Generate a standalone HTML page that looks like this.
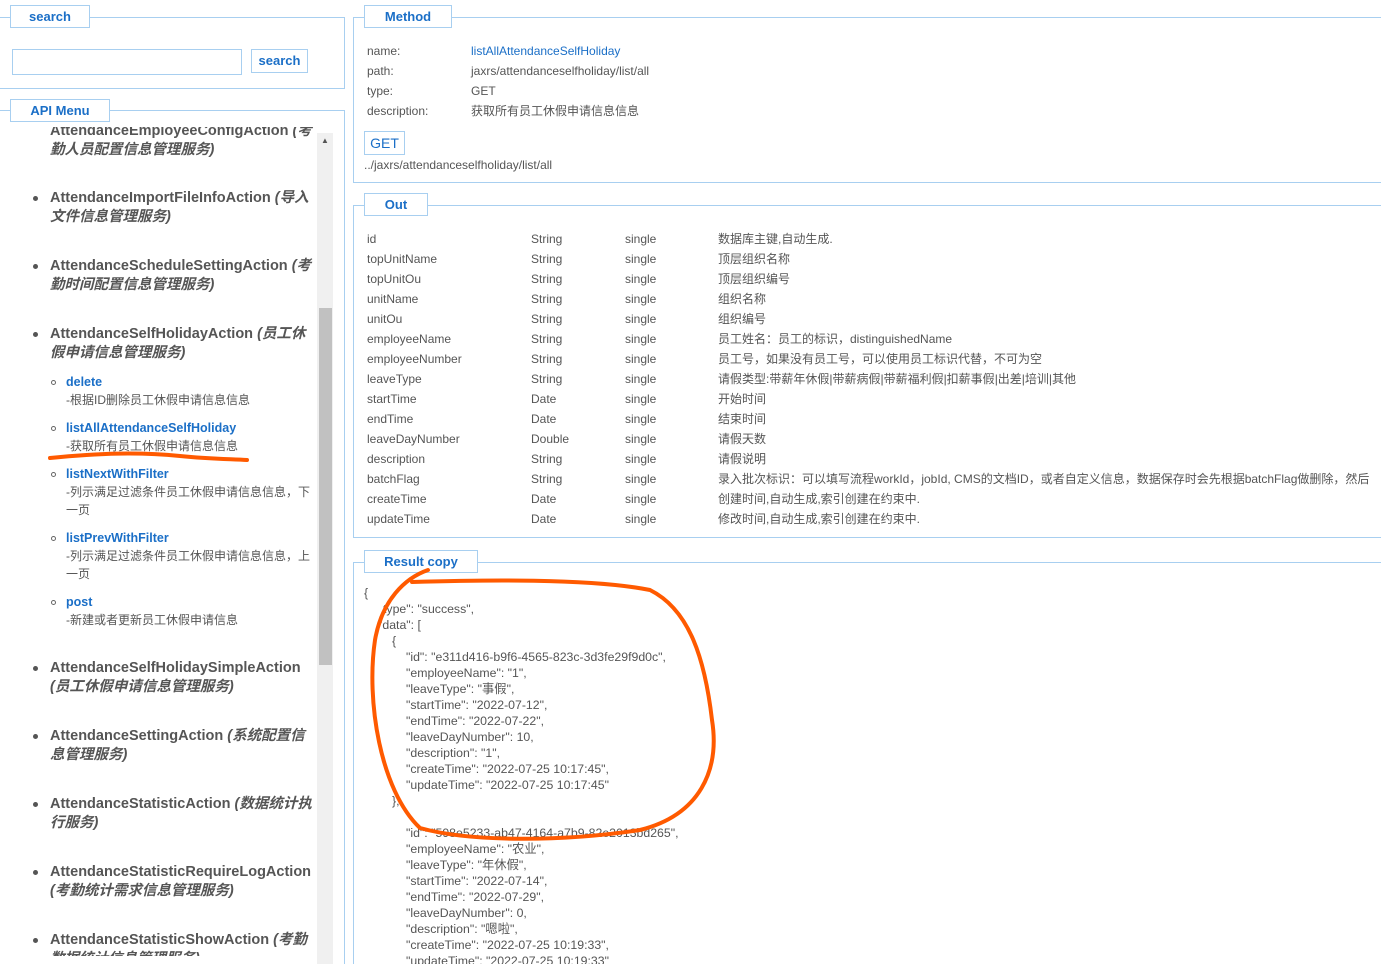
<!DOCTYPE html>
<html><head><meta charset="utf-8"><style>
*{margin:0;padding:0;box-sizing:border-box}
html{width:1381px;height:964px;overflow:hidden}
body{width:1381px;height:964px;overflow:hidden;background:#fff;font-family:"Liberation Sans","Noto Sans CJK SC",sans-serif;color:#555;font-size:12px;position:relative}
.a{position:absolute;white-space:nowrap}
.fs{position:absolute;border:1px solid #a8cff0}
.lg{position:absolute;border:1px solid #a8cff0;background:#fff;color:#1b6fc7;font-weight:bold;font-size:13px;text-align:center;line-height:21px}
.m{position:absolute;left:50px;width:268px;font-size:14.5px;font-weight:bold;color:#555;line-height:19px;white-space:normal}
.m i{font-style:italic}
.b{position:absolute;left:33px;width:5px;height:5px;border-radius:50%;background:#555}
.s{position:absolute;left:66px;font-size:12px;line-height:18px;width:250px;white-space:normal}
.s b{color:#1b6fc7;font-size:12.5px}
.c{position:absolute;left:51px;width:5px;height:5px;border-radius:50%;border:1px solid #666}
.r{position:absolute;font-size:12px;white-space:nowrap;line-height:16px;height:16px}
.j{position:absolute;font-size:12.3px;white-space:nowrap;line-height:16px;height:16px}
</style></head><body>
<div class="fs" style="left:-2px;top:17px;width:347px;height:72px"></div>
<div class="lg" style="left:10px;top:5px;width:80px;height:23px">search</div>
<div class="fs" style="left:12px;top:49px;width:230px;height:26px"></div>
<div class="lg" style="left:251px;top:49px;width:57px;height:24px;line-height:22px">search</div>
<div class="fs" style="left:0;top:110px;width:345px;height:854px;border-bottom:none;border-left:none"></div>
<div class="lg" style="left:10px;top:99px;width:100px;height:23px">API Menu</div>
<div style="position:absolute;left:0;top:127px;width:317px;height:837px;overflow:hidden">
<div style="position:absolute;left:0;top:-4px;width:317px;height:840px">
<div class="m" style="top:-1px">AttendanceEmployeeConfigAction <i>(考勤人员配置信息管理服务)</i></div>
<div class="b" style="top:73px"></div><div class="m" style="top:66px">AttendanceImportFileInfoAction <i>(导入文件信息管理服务)</i></div>
<div class="b" style="top:141px"></div><div class="m" style="top:134px">AttendanceScheduleSettingAction <i>(考勤时间配置信息管理服务)</i></div>
<div class="b" style="top:209px"></div><div class="m" style="top:202px">AttendanceSelfHolidayAction <i>(员工休假申请信息管理服务)</i></div>
<div class="c" style="top:257px"></div><div class="s" style="top:250px"><b>delete</b><br>-根据ID删除员工休假申请信息信息</div>
<div class="c" style="top:303px"></div><div class="s" style="top:296px"><b>listAllAttendanceSelfHoliday</b><br>-获取所有员工休假申请信息信息</div>
<div class="c" style="top:349px"></div><div class="s" style="top:342px"><b>listNextWithFilter</b><br>-列示满足过滤条件员工休假申请信息信息，下一页</div>
<div class="c" style="top:413px"></div><div class="s" style="top:406px"><b>listPrevWithFilter</b><br>-列示满足过滤条件员工休假申请信息信息，上一页</div>
<div class="c" style="top:477px"></div><div class="s" style="top:470px"><b>post</b><br>-新建或者更新员工休假申请信息</div>
<div class="b" style="top:543px"></div><div class="m" style="top:536px">AttendanceSelfHolidaySimpleAction <i>(员工休假申请信息管理服务)</i></div>
<div class="b" style="top:611px"></div><div class="m" style="top:604px">AttendanceSettingAction <i>(系统配置信息管理服务)</i></div>
<div class="b" style="top:679px"></div><div class="m" style="top:672px">AttendanceStatisticAction <i>(数据统计执行服务)</i></div>
<div class="b" style="top:747px"></div><div class="m" style="top:740px">AttendanceStatisticRequireLogAction <i>(考勤统计需求信息管理服务)</i></div>
<div class="b" style="top:815px"></div><div class="m" style="top:808px;height:25px;overflow:hidden">AttendanceStatisticShowAction <i>(考勤数据统计信息管理服务)</i></div>
</div></div>
<div style="position:absolute;left:317px;top:133px;width:16px;height:831px;background:#f0f0f0"></div>
<div style="position:absolute;left:319px;top:308px;width:13px;height:357px;background:#c1c1c1"></div>
<div class="a" style="left:321px;top:136px;font-size:8px;color:#555">▲</div>
<div class="fs" style="left:353px;top:17px;width:1028px;height:166px;border-right:none"></div>
<div class="lg" style="left:364px;top:5px;width:88px;height:23px">Method</div>
<div class="r" style="left:367px;top:43px">name:</div>
<div class="r" style="left:367px;top:63px">path:</div>
<div class="r" style="left:367px;top:83px">type:</div>
<div class="r" style="left:367px;top:103px">description:</div>
<div class="r" style="left:471px;top:43px;color:#1b6fc7">listAllAttendanceSelfHoliday</div>
<div class="r" style="left:471px;top:63px">jaxrs/attendanceselfholiday/list/all</div>
<div class="r" style="left:471px;top:83px">GET</div>
<div class="r" style="left:471px;top:103px">获取所有员工休假申请信息信息</div>
<div class="fs" style="left:364px;top:131px;width:41px;height:24px;color:#1b6fc7;font-size:14px;text-align:center;line-height:22px">GET</div>
<div class="r" style="left:364px;top:157px">../jaxrs/attendanceselfholiday/list/all</div>
<div class="fs" style="left:353px;top:205px;width:1028px;height:333px;border-right:none"></div>
<div class="lg" style="left:364px;top:193px;width:64px;height:23px">Out</div>
<div id="out"></div>
<div class="fs" style="left:353px;top:562px;width:1028px;height:402px;border-right:none;border-bottom:none"></div>
<div class="lg" style="left:364px;top:550px;width:114px;height:23px">Result copy</div>
<div id="res"></div>
<svg style="position:absolute;left:0;top:0" width="1381" height="964">
<path d="M50 458 C100 453 140 452 180 456 C210 459 230 459 247 460" stroke="#ff5a00" stroke-width="4" fill="none" stroke-linecap="round"/>
<path d="M428 570 C405 578 382 600 375 640 C366 700 380 790 420 828 C470 842 560 842 640 830 C700 815 720 770 712 720 C705 660 690 610 650 590 C590 578 480 580 412 582" stroke="#ff5a00" stroke-width="4" fill="none" stroke-linecap="round"/>
</svg>
<script>
var rows=[["id","String","数据库主键,自动生成."],["topUnitName","String","顶层组织名称"],["topUnitOu","String","顶层组织编号"],["unitName","String","组织名称"],["unitOu","String","组织编号"],["employeeName","String","员工姓名：员工的标识，distinguishedName"],["employeeNumber","String","员工号，如果没有员工号，可以使用员工标识代替，不可为空"],["leaveType","String","请假类型:带薪年休假|带薪病假|带薪福利假|扣薪事假|出差|培训|其他"],["startTime","Date","开始时间"],["endTime","Date","结束时间"],["leaveDayNumber","Double","请假天数"],["description","String","请假说明"],["batchFlag","String","录入批次标识：可以填写流程workId，jobId, CMS的文档ID，或者自定义信息，数据保存时会先根据batchFlag做删除，然后"],["createTime","Date","创建时间,自动生成,索引创建在约束中."],["updateTime","Date","修改时间,自动生成,索引创建在约束中."]];
var h="";rows.forEach(function(r,i){var t=231+i*20;h+='<div class="r" style="left:367px;top:'+t+'px">'+r[0]+'</div><div class="r" style="left:531px;top:'+t+'px">'+r[1]+'</div><div class="r" style="left:625px;top:'+t+'px">single</div><div class="r" style="left:718px;top:'+t+'px;max-width:663px;overflow:hidden">'+r[2]+'</div>';});
document.getElementById("out").innerHTML=h;
var j=[[364,"{"],[383,'type": "success",'],[378,'"data": ['],[392,"{"],
[406,'"id": "e311d416-b9f6-4565-823c-3d3fe29f9d0c",'],[406,'"employeeName": "1",'],[406,'"leaveType": "事假",'],[406,'"startTime": "2022-07-12",'],[406,'"endTime": "2022-07-22",'],[406,'"leaveDayNumber": 10,'],[406,'"description": "1",'],[406,'"createTime": "2022-07-25 10:17:45",'],[406,'"updateTime": "2022-07-25 10:17:45"'],[392,"},"],
[406,'"id": "598e5233-ab47-4164-a7b9-82e2013bd265",'],[406,'"employeeName": "农业",'],[406,'"leaveType": "年休假",'],[406,'"startTime": "2022-07-14",'],[406,'"endTime": "2022-07-29",'],[406,'"leaveDayNumber": 0,'],[406,'"description": "嗯啦",'],[406,'"createTime": "2022-07-25 10:19:33",'],[406,'"updateTime": "2022-07-25 10:19:33"']];
var g="";j.forEach(function(l,i){var t=585+i*16;if(i>=14)t+=16;var hh=Math.min(16,964-t);g+='<div class="j" style="left:'+l[0]+'px;top:'+t+'px;height:'+hh+'px;overflow:hidden">'+l[1]+'</div>';});
document.getElementById("res").innerHTML=g;
</script>
</body></html>
